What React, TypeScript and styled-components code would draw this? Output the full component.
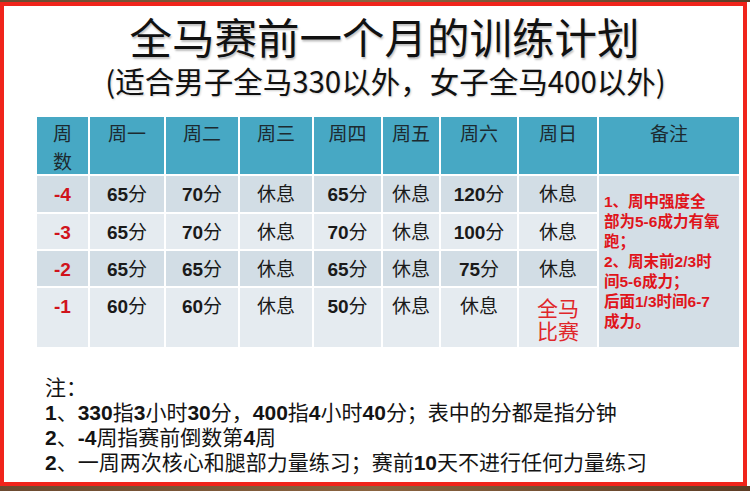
import React from "react";
import styled, { createGlobalStyle } from "styled-components";

const GlobalStyle = createGlobalStyle`
  html, body {
    margin: 0;
    padding: 0;
    background: #ffffff;
  }
  body {
    font-family: "Liberation Sans", "Noto Sans CJK SC", sans-serif;
  }
`;

/* --- Styles --- */
const Page = styled.div`
  width: 750px;
  height: 491px;
  display: flex;
  flex-direction: column;
  background: #ffffff;
  overflow: hidden;
`;
const Strip = styled.div<{ $h: number }>`
  height: ${(p) => p.$h}px;
  flex: none;
  background: linear-gradient(90deg, #6b4a30, #8a6440 50%, #5c3d26);
`;
const Frame = styled.div`
  width: 747px;
  height: 484px;
  box-sizing: border-box;
  border: 4px solid #f0241b;
  background: #ffffff;
  display: flex;
  flex-direction: column;
  flex: none;
`;
const Title = styled.h1`
  margin: 8px 0 0;
  padding-left: 22px;
  text-align: center;
  font-size: 42.5px;
  line-height: 44px;
  font-weight: 400;
  color: #111;
  font-family: "Noto Sans CJK SC", sans-serif;
  text-shadow: 1px 2px 2px rgba(0, 0, 0, 0.25);
`;
const Subtitle = styled.p`
  margin: 6px 0 0;
  padding-left: 24px;
  text-align: center;
  font-size: 29.5px;
  line-height: 32px;
  color: #111;
  font-family: "Noto Sans CJK SC", sans-serif;
  text-shadow: 1px 1px 2px rgba(0, 0, 0, 0.2);
`;
const Grid = styled.div`
  margin: 21px 0 0 33px;
  display: grid;
  grid-template-columns: 51px 74px 72px 72px 67px 56px 76px 78px 140px;
  grid-template-rows: 57px 36px 35px 35px 59px;
  gap: 2px;
  background: #ffffff;
  width: max-content;
`;
const HeadCell = styled.div`
  background: #47a8c4;
  color: #1c2a30;
  font-family: "Noto Sans CJK SC", sans-serif;
  font-size: 19px;
  line-height: 28px;
  padding-top: 2px;
  text-align: center;
`;
const Cell = styled.div<{ $alt: boolean }>`
  background: ${(p) => (p.$alt ? "#e5ebf0" : "#d2dde5")};
  font-size: 19px;
  line-height: 24px;
  padding-top: 7px;
  text-align: center;
  color: #1a1a1a;
  font-family: "Liberation Sans", "Noto Sans CJK SC", sans-serif;
`;
const Week = styled.span`
  color: #d0131b;
  font-weight: 700;
`;
const Num = styled.b`
  font-weight: 700;
`;
const Race = styled.span`
  display: inline-block;
  color: #e0262a;
  font-size: 21px;
  line-height: 23px;
  padding-top: 2px;
`;
const Remark = styled.div`
  grid-column: 9;
  grid-row: 2 / span 4;
  background: #d3dee6;
  display: flex;
  align-items: center;
  padding-left: 5px;
  color: #e0141b;
  font-weight: 700;
  font-size: 15.5px;
  line-height: 20px;
  white-space: nowrap;
  font-family: "Liberation Sans", "Noto Sans CJK SC", sans-serif;
`;
const Notes = styled.div`
  margin: 28px 0 0 41px;
  font-size: 21px;
  line-height: 25px;
  color: #141414;
  font-family: "Liberation Sans", "Noto Sans CJK SC", sans-serif;
`;

const heads = ["周一", "周二", "周三", "周四", "周五", "周六", "周日"];
const rows = [
  { week: "-4", cells: ["65分", "70分", "休息", "65分", "休息", "120分", "休息"] },
  { week: "-3", cells: ["65分", "70分", "休息", "70分", "休息", "100分", "休息"] },
  { week: "-2", cells: ["65分", "65分", "休息", "65分", "休息", "75分", "休息"] },
  { week: "-1", cells: ["60分", "60分", "休息", "50分", "休息", "休息", "race"] },
];
const remarks = [
  "1、周中强度全",
  "部为5-6成力有氧",
  "跑；",
  "2、周末前2/3时",
  "间5-6成力；",
  "后面1/3时间6-7",
  "成力。",
];
const notes = [
  "注：",
  "1、330指3小时30分，400指4小时40分；表中的分都是指分钟",
  "2、-4周指赛前倒数第4周",
  "2、一周两次核心和腿部力量练习；赛前10天不进行任何力量练习",
];

// 숫자만 굵게
function withNums(text: string) {
  return text.split(/(-?\d+)/).map((part, i) =>
    /\d/.test(part) ? <Num key={i}>{part}</Num> : <span key={i}>{part}</span>
  );
}

export default function App() {
  return (
    <>
      <GlobalStyle />
      <Page>
        <Strip $h={2} />
        <Frame>
          <Title>全马赛前一个月的训练计划</Title>
          <Subtitle>(适合男子全马330以外，女子全马400以外)</Subtitle>
          <Grid>
            <HeadCell>
              周<br />数
            </HeadCell>
            {heads.map((h) => (
              <HeadCell key={h}>{h}</HeadCell>
            ))}
            <HeadCell>备注</HeadCell>
            {rows.map((row, r) => (
              <React.Fragment key={row.week}>
                <Cell $alt={r % 2 === 1}>
                  <Week>{row.week}</Week>
                </Cell>
                {row.cells.map((c, i) => (
                  <Cell key={i} $alt={r % 2 === 1}>
                    {c === "race" ? (
                      <Race>
                        全马
                        <br />
                        比赛
                      </Race>
                    ) : (
                      withNums(c)
                    )}
                  </Cell>
                ))}
              </React.Fragment>
            ))}
            <Remark>
              <div>
                {remarks.map((line) => (
                  <div key={line}>{line}</div>
                ))}
              </div>
            </Remark>
          </Grid>
          <Notes>
            {notes.map((n, i) => (
              <div key={i}>{withNums(n)}</div>
            ))}
          </Notes>
        </Frame>
        <Strip $h={5} />
      </Page>
    </>
  );
}
